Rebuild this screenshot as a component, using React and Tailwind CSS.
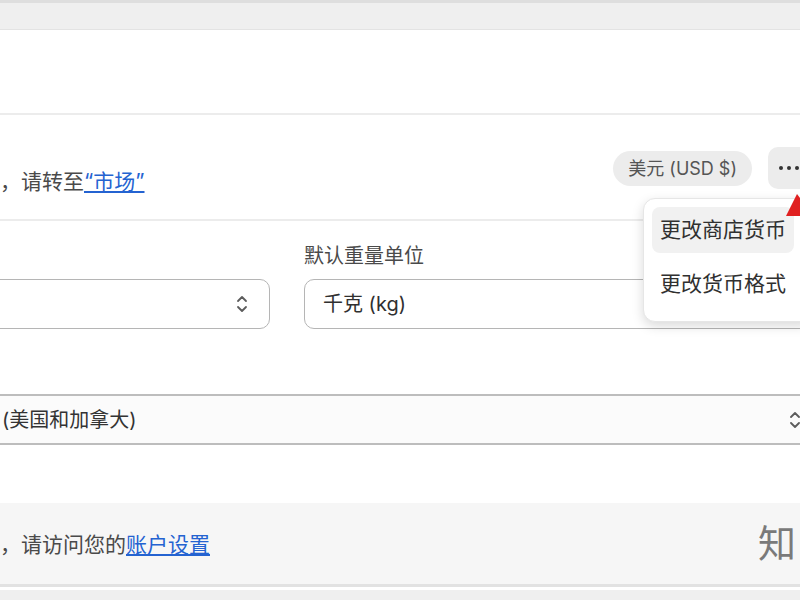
import { useState } from 'react';

const font = { fontFamily: '"Inter", "Noto Sans CJK SC", sans-serif' };

/**
 * Double chevron for native-looking selects.
 */
const UpDown = ({ className = '' }) => (
  <svg className={className} width="14" height="22" viewBox="0 0 14 22" fill="none" stroke="#5c5c5c" strokeWidth="1.8" strokeLinecap="round" strokeLinejoin="round">
    <path d="M3 8l4-4 4 4" />
    <path d="M3 14l4 4 4-4" />
  </svg>
);

const Select = ({ value, className = '', chevron = true }) => (
  <div className={`h-[50px] rounded-[10px] border-[1.5px] border-[#b5b5b5] bg-white flex items-center justify-between px-[18px] ${className}`}>
    <span className="text-[20px] text-[#303030]">{value}</span>
    {chevron && <UpDown />}
  </div>
);

const App = () => {
  const [open] = useState(true);

  return (
    <div className="relative w-[800px] h-[600px] overflow-hidden bg-white" style={font}>
      {/* barre du haut */}
      <div className="h-[30px] bg-[#efefef] border-t-[3px] border-[#dedede] border-b border-b-[#e3e3e3]" />
      <div className="h-[83px] bg-white" />

      {/* carte devise */}
      <div className="border-t-2 border-[#ececec]">
        <div className="h-[104px] flex items-center justify-between">
          <p className="text-[21px] text-[#4a4a4a] pt-[30px] whitespace-nowrap">
            ，请转至<a className="text-[#2463d1] underline underline-offset-2">“市场”</a>
          </p>
          <div className="flex items-center gap-[16px] mr-[-20px] pt-[2px]">
            <span className="h-[35px] px-[15px] rounded-full bg-[#ececec] text-[18px] text-[#555] flex items-center whitespace-nowrap">
              美元 (USD $)
            </span>
            <button type="button" className="w-[52px] h-[42px] rounded-[10px] bg-[#ececec] flex items-center pl-[11px] gap-[4px]">
              <span className="w-[4px] h-[4px] rounded-full bg-[#333]" />
              <span className="w-[4px] h-[4px] rounded-full bg-[#333]" />
              <span className="w-[4px] h-[4px] rounded-full bg-[#333]" />
            </button>
          </div>
        </div>

        <div className="border-t-2 border-[#ececec] pt-[22px]">
          <div className="flex gap-[34px] ml-[-35px]">
            <div className="w-[305px] shrink-0">
              <div className="h-[36px]" />
              <Select value="" className="pr-[20px]" />
            </div>
            <div className="w-[510px] shrink-0">
              <div className="h-[36px] text-[20px] text-[#4a4a4a] leading-[26px] whitespace-nowrap">默认重量单位</div>
              <Select value="千克 (kg)" chevron={false} />
            </div>
          </div>

          <div className="mt-[65px] mx-[-12px]">
            <div className="h-[51px] rounded-[8px] border-[2px] border-[#bdbdbd] bg-[#fbfbfb] flex items-center justify-between pl-[12px] pr-[8px]">
              <span className="text-[20px] text-[#333]">(美国和加拿大)</span>
              <UpDown />
            </div>
          </div>
        </div>
      </div>

      {/* pied gris */}
      <div className="absolute left-0 right-0 top-[503px] h-[84px] bg-[#f6f6f6] border-b-[3px] border-[#e2e2e2] flex items-center">
        <p className="text-[21px] text-[#4a4a4a] pt-[2px] whitespace-nowrap">
          ，请访问您的<a className="text-[#2463d1] underline underline-offset-2">账户设置</a>
        </p>
      </div>
      <div className="absolute left-0 right-0 top-[590px] h-[10px] bg-[#efefef]" />

      {/* filigrane */}
      <span className="absolute left-[758px] top-[524px] text-[38px] text-[#7a7a7a] leading-none whitespace-nowrap">知</span>

      {open && (
        <div className="absolute left-[643px] top-[198px] w-[170px] h-[124px] rounded-[12px] bg-white border border-[#e6e6e6] shadow-[0_4px_12px_rgba(0,0,0,0.15)] p-[8px]">
          <div className="h-[46px] rounded-[8px] bg-[#f1f1f1] flex items-center pl-[8px] text-[21px] text-[#303030] mr-[10px] whitespace-nowrap">
            更改商店货币
          </div>
          <div className="h-[62px] flex items-center pl-[8px] text-[21px] text-[#303030] whitespace-nowrap">
            更改货币格式
          </div>
        </div>
      )}

      {/* flèche rouge */}
      <svg className="absolute left-[780px] top-[192px]" width="20" height="26" viewBox="0 0 20 26">
        <polygon points="17,2 6,24 20,24 20,6" fill="#e02020" />
      </svg>
    </div>
  );
};

export default App;
